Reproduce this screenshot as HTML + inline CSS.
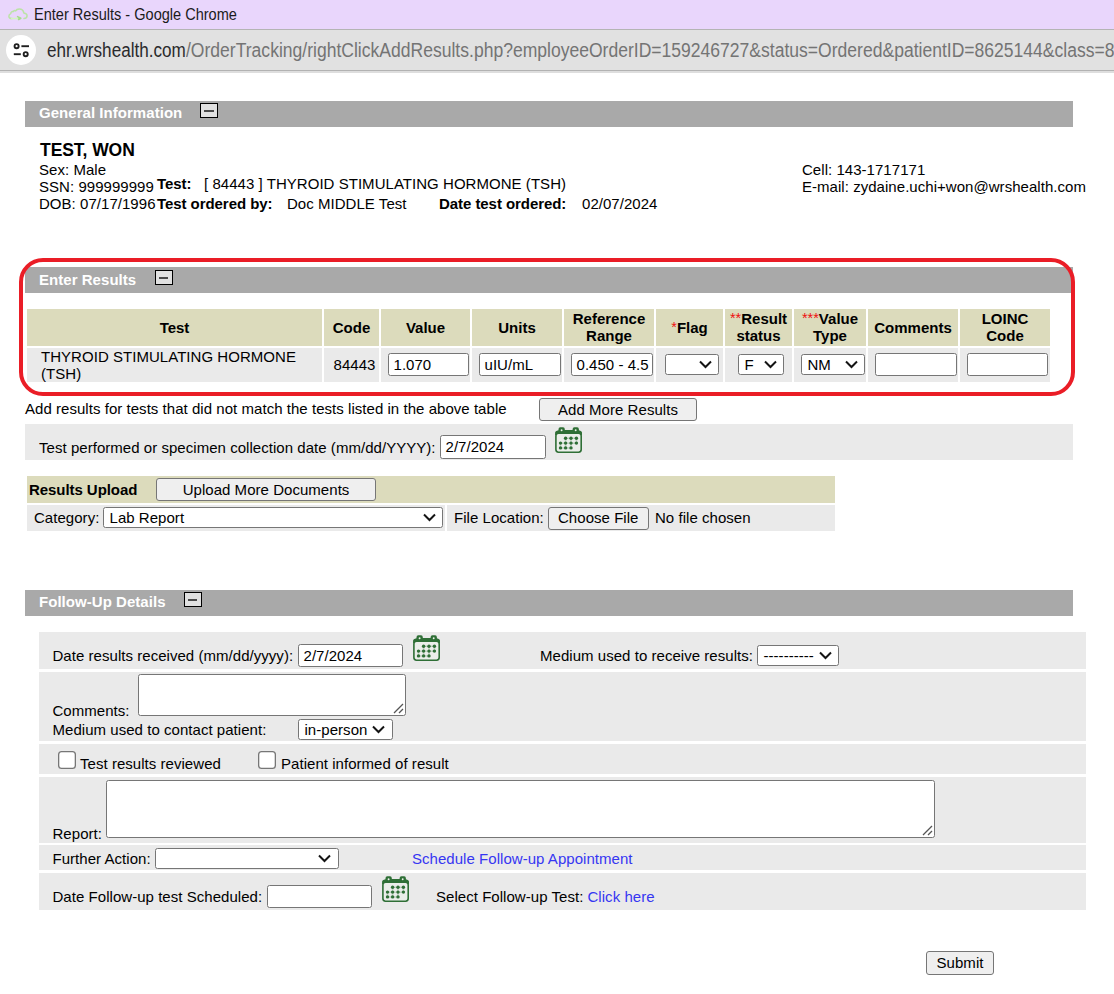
<!DOCTYPE html>
<html lang="en">
<head>
<meta charset="utf-8">
<title>Enter Results</title>
<style>
html,body{margin:0;padding:0;background:#fff}
body{width:1114px;height:994px;position:relative;overflow:hidden;font:15px/17px "Liberation Sans",Arial,sans-serif;color:#000;letter-spacing:.04px}
div,span,a,svg{position:absolute;box-sizing:border-box}
.t{white-space:nowrap}
.b{font-weight:bold;letter-spacing:-.06px}
.bar{background:#a9a9a9;left:25px;width:1048px;height:26px}
.bar .t{left:14px;top:3px;color:#fff;font-weight:bold;line-height:17px}
.tg{width:18px;height:15px;border:1.5px solid #000;background:#e1e1e1;top:2px}
.tg i{position:absolute;left:3px;top:6.2px;width:9.5px;height:2px;background:#4a4a4a}
.k{background:#dcdbbc}
.g{background:#eaeaea}
.in{background:#fff;border:1px solid #767676;border-radius:2.5px;white-space:nowrap;overflow:hidden;padding-left:4.5px;line-height:21px}
.sel{background:#fff;border:1px solid #767676;border-radius:2.5px;white-space:nowrap;overflow:hidden;padding-left:5.5px;line-height:19px}
.sel svg{right:6.3px;top:5px;width:13px;height:9px}
.btn{background:#efefef;border:1px solid #767676;border-radius:3px;white-space:nowrap;text-align:center;line-height:21px}
.ta{background:#fff;border:1px solid #767676;border-radius:2.5px}
.ta svg{right:1px;bottom:1px;width:12px;height:12px}
.cb{background:#fff;box-shadow:inset 0 0 0 1.3px #767676;border-radius:3.5px;width:18px;height:18px}
.lnk{color:#3636f2;white-space:nowrap}
.th{font-weight:bold;text-align:center;white-space:nowrap;letter-spacing:0}
.r{color:#ee1111;font-weight:normal;font-size:14.5px;position:relative;top:-1.5px}
</style>
</head>
<body>

<!-- browser chrome -->
<div id="titlebar" style="left:0;top:0;width:1114px;height:29px;background:#e9d6fc"></div>
<svg id="cloud" style="left:0;top:0" width="40" height="29" viewBox="0 0 40 29"><g fill="none" stroke="#bbe3a6" stroke-width="1.5" stroke-linecap="round" stroke-linejoin="round"><path d="M12 18.5 C9.6 18.6 8.9 17.4 8.9 16.2 C8.9 14.6 10 13.9 10.8 13.6 C10.7 12.2 11.9 11.3 13.1 11.7 C13.6 10.7 14.8 10.3 15.7 10.9 C16.3 9.6 17.6 8.9 19.2 8.9 C21.8 8.9 23.5 10.6 23.8 12.9 C25.9 13.2 27.1 14.4 27.1 15.8 C27.1 17.4 25.8 18.4 24 18.6"/><path d="M11.5 18.4 H18.5" stroke="#d4f4c0"/><path d="M17.6 16.6 L20.8 18.2 L18.6 19.5 M18.6 17.4 L19.3 18.5" stroke="#a9dc90" stroke-width="1.6"/></g></svg>
<div class="t" id="ttl" style="letter-spacing:0;left:33.8px;top:4.6px;font-size:16px;line-height:20px;color:#1b1b1b;transform-origin:0 0;transform:scaleX(.909)">Enter Results - Google Chrome</div>
<div style="left:0;top:29px;width:1114px;height:1px;background:#b4b4b4"></div>
<div id="addr" style="left:0;top:30px;width:1114px;height:40px;background:#e1e1e1"></div>
<div style="left:0;top:70px;width:1114px;height:1px;background:#b2b2b2"></div>
<div style="left:0;top:71px;width:1114px;height:2px;background:#dedede"></div>
<div style="left:6px;top:35px;width:30px;height:30px;border-radius:50%;background:#fff"></div>
<svg style="left:6px;top:35px" width="30" height="30" viewBox="0 0 30 30"><g fill="none" stroke="#1f1f1f" stroke-width="1.9"><circle cx="10.6" cy="11.2" r="2.05"/><path d="M15.4 11.2H23"/><circle cx="19.7" cy="19.2" r="2.05"/><path d="M7.8 19.2H14.8"/></g></svg>
<div class="t" id="url1" style="letter-spacing:0;left:46.8px;top:38px;font-size:20px;line-height:24px;color:#2a2a2c;transform-origin:0 0;transform:scaleX(.855)">ehr.wrshealth.com</div>
<div class="t" id="url2" style="letter-spacing:0;left:186.3px;top:38px;font-size:20px;line-height:24px;color:#747474;transform-origin:0 0;transform:scaleX(.877)">/OrderTracking/rightClickAddResults.php?employeeOrderID=159246727&amp;status=Ordered&amp;patientID=8625144&amp;class=8</div>

<!-- General Information -->
<div class="bar" style="top:101px"><div class="t">General Information</div><div class="tg" style="left:175px"><i></i></div></div>
<div class="t b" style="left:40px;top:140px;font-size:17.5px;line-height:20px">TEST, WON</div>
<div class="t" style="left:39px;top:161px">Sex: Male</div>
<div class="t" style="left:39px;top:178px">SSN: 999999999</div>
<div class="t" style="left:39px;top:195px">DOB: 07/17/1996</div>
<div class="t b" style="left:157px;top:175px">Test:</div>
<div class="t" style="left:204px;top:175px">[ 84443 ] THYROID STIMULATING HORMONE (TSH)</div>
<div class="t b" style="left:157px;top:195px">Test ordered by:</div>
<div class="t" style="left:287px;top:195px">Doc MIDDLE Test</div>
<div class="t b" style="left:439px;top:195px">Date test ordered:</div>
<div class="t" style="left:582px;top:195px">02/07/2024</div>
<div class="t" style="left:802px;top:161px">Cell: 143-1717171</div>
<div class="t" style="left:802px;top:178px">E-mail: zydaine.uchi+won@wrshealth.com</div>

<!-- Enter Results -->
<div class="bar" style="top:267px"><div class="t" style="top:4px">Enter Results</div><div class="tg" style="left:129.5px;top:3px"><i></i></div></div>
<div class="k" style="left:27px;top:309px;width:295px;height:37px"></div>
<div class="g" style="left:27px;top:348px;width:295px;height:34px"></div>
<div class="th" style="left:27px;top:319px;width:295px">Test</div>
<div class="k" style="left:324px;top:309px;width:55px;height:37px"></div>
<div class="g" style="left:324px;top:348px;width:55px;height:34px"></div>
<div class="th" style="left:324px;top:319px;width:55px">Code</div>
<div class="k" style="left:381px;top:309px;width:89px;height:37px"></div>
<div class="g" style="left:381px;top:348px;width:89px;height:34px"></div>
<div class="th" style="left:381px;top:319px;width:89px">Value</div>
<div class="k" style="left:472px;top:309px;width:90px;height:37px"></div>
<div class="g" style="left:472px;top:348px;width:90px;height:34px"></div>
<div class="th" style="left:472px;top:319px;width:90px">Units</div>
<div class="k" style="left:564px;top:309px;width:90px;height:37px"></div>
<div class="g" style="left:564px;top:348px;width:90px;height:34px"></div>
<div class="th" style="left:564px;top:310px;width:90px">Reference</div>
<div class="th" style="left:564px;top:326.5px;width:90px">Range</div>
<div class="k" style="left:656px;top:309px;width:67px;height:37px"></div>
<div class="g" style="left:656px;top:348px;width:67px;height:34px"></div>
<div class="th" style="left:656px;top:319px;width:67px"><span class="r">*</span>Flag</div>
<div class="k" style="left:725px;top:309px;width:67px;height:37px"></div>
<div class="g" style="left:725px;top:348px;width:67px;height:34px"></div>
<div class="th" style="left:725px;top:310px;width:67px"><span class="r">**</span>Result</div>
<div class="th" style="left:725px;top:326.5px;width:67px">status</div>
<div class="k" style="left:794px;top:309px;width:72px;height:37px"></div>
<div class="g" style="left:794px;top:348px;width:72px;height:34px"></div>
<div class="th" style="left:794px;top:310px;width:72px"><span class="r">***</span>Value</div>
<div class="th" style="left:794px;top:326.5px;width:72px">Type</div>
<div class="k" style="left:868px;top:309px;width:90px;height:37px"></div>
<div class="g" style="left:868px;top:348px;width:90px;height:34px"></div>
<div class="th" style="left:868px;top:319px;width:90px">Comments</div>
<div class="k" style="left:960px;top:309px;width:90px;height:37px"></div>
<div class="g" style="left:960px;top:348px;width:90px;height:34px"></div>
<div class="th" style="left:960px;top:310px;width:90px">LOINC</div>
<div class="th" style="left:960px;top:326.5px;width:90px">Code</div>
<div class="t" style="left:41px;top:348px">THYROID STIMULATING HORMONE</div>
<div class="t" style="left:41px;top:365px">(TSH)</div>
<div class="t" style="left:333.5px;top:356px">84443</div>
<div class="in" style="left:388px;top:353px;width:81px;height:23px">1.070</div>
<div class="in" style="left:479px;top:353px;width:82px;height:23px">uIU/mL</div>
<div class="in" style="left:571px;top:353px;width:82px;height:23px">0.450 - 4.5</div>
<div class="sel" style="left:665px;top:354px;width:54px;height:21px"><svg viewBox="0 0 13 9"><path d="M1 1.5 L6.5 7 L12 1.5" fill="none" stroke="#141414" stroke-width="2"/></svg></div>
<div class="sel" style="left:738px;top:354px;width:46px;height:21px">F<svg viewBox="0 0 13 9"><path d="M1 1.5 L6.5 7 L12 1.5" fill="none" stroke="#141414" stroke-width="2"/></svg></div>
<div class="sel" style="left:801px;top:354px;width:64px;height:21px">NM<svg viewBox="0 0 13 9"><path d="M1 1.5 L6.5 7 L12 1.5" fill="none" stroke="#141414" stroke-width="2"/></svg></div>
<div class="in" style="left:875px;top:353px;width:82px;height:23px"></div>
<div class="in" style="left:967px;top:353px;width:81px;height:23px"></div>
<div id="redbox" style="left:19px;top:257.5px;width:1056px;height:138.5px;border:4px solid #ea1d26;border-radius:24px"></div>
<div class="t" style="left:25px;top:400px">Add results for tests that did not match the tests listed in the above table</div>
<div class="btn" style="left:539px;top:397.5px;width:158px;height:23.5px">Add More Results</div>
<div class="g" style="left:25px;top:424px;width:1048px;height:36px"></div>
<div class="t" style="left:39px;top:438.5px">Test performed or specimen collection date (mm/dd/YYYY):</div>
<div class="in" style="left:440px;top:435px;width:106px;height:23.5px">2/7/2024</div>
<svg style="left:555px;top:427px" width="27" height="26" viewBox="0 0 27 26"><path d="M0.1 8 L0.1 5.6 Q0.1 4.5 1.3 4 L3.5 3.2 L3.5 2.2 Q3.5 0.3 5.3 0.3 L8 0.3 Q9.8 0.3 9.8 2.2 L9.8 3.1 L17.6 3.1 L17.6 2.2 Q17.6 0.3 19.4 0.3 L22.1 0.3 Q23.9 0.3 23.9 2.2 L23.9 3.2 L25.8 4 Q27 4.5 27 5.6 L27 8 Z" fill="#2f6f36"/><circle cx="6.6" cy="3.2" r="0.95" fill="#eef3ec"/><circle cx="20.7" cy="3.2" r="0.95" fill="#eef3ec"/><rect x="0.9" y="6.2" width="25.3" height="19" rx="2.6" fill="#ebeeea" stroke="#2f6f36" stroke-width="1.6"/><path d="M5.5 16.2H21.4M5.5 21H16M10.6 11.3H21.4M5.5 16.2V21M10.6 11.3V21M16 11.3V21M21.4 11.3V16.2" stroke="#2f6f36" stroke-opacity=".22" stroke-width="1.6" fill="none"/><g fill="#2f6f36"><circle cx="10.6" cy="11.2" r="1.7"/><circle cx="16" cy="11.2" r="1.7"/><circle cx="21.4" cy="11.2" r="1.7"/><circle cx="5.5" cy="16.1" r="1.7"/><circle cx="10.6" cy="16.1" r="1.7"/><circle cx="16" cy="16.1" r="1.7"/><circle cx="21.4" cy="16.1" r="1.7"/><circle cx="5.5" cy="20.9" r="1.7"/><circle cx="10.6" cy="20.9" r="1.7"/><circle cx="16" cy="20.9" r="1.7"/></g></svg>
<!-- Results Upload -->
<div class="k" style="left:27px;top:476px;width:808px;height:27px"></div>
<div class="t b" style="left:29px;top:481px">Results Upload</div>
<div class="btn" style="left:156px;top:478px;width:220px;height:23px">Upload More Documents</div>
<div class="g" style="left:27px;top:505px;width:417.5px;height:26px"></div>
<div class="g" style="left:447px;top:505px;width:388px;height:26px"></div>
<div class="t" style="left:34px;top:509px">Category:</div>
<div class="sel" style="left:103px;top:507px;width:340px;height:21px">Lab Report<svg viewBox="0 0 13 9"><path d="M1 1.5 L6.5 7 L12 1.5" fill="none" stroke="#141414" stroke-width="2"/></svg></div>
<div class="t" style="left:454px;top:509px">File Location:</div>
<div class="btn" style="left:548px;top:506.5px;width:100.5px;height:23px;line-height:20.5px">Choose File</div>
<div class="t" style="left:655px;top:509px">No file chosen</div>
<!-- Follow-Up Details -->
<div class="bar" style="top:590px"><div class="t">Follow-Up Details</div><div class="tg" style="left:158.5px"><i></i></div></div>
<div class="g" style="left:39px;top:632px;width:1047px;height:37px"></div>
<div class="g" style="left:39px;top:672px;width:1047px;height:69px"></div>
<div class="g" style="left:39px;top:744px;width:1047px;height:30px"></div>
<div class="g" style="left:39px;top:777px;width:1047px;height:66px"></div>
<div class="g" style="left:39px;top:845px;width:1047px;height:25px"></div>
<div class="g" style="left:39px;top:873px;width:1047px;height:37px"></div>
<div class="t" style="left:52.5px;top:647px">Date results received (mm/dd/yyyy):</div>
<div class="in" style="left:298px;top:644px;width:105px;height:23px">2/7/2024</div>
<svg style="left:412.6px;top:635px" width="27" height="26" viewBox="0 0 27 26"><path d="M0.1 8 L0.1 5.6 Q0.1 4.5 1.3 4 L3.5 3.2 L3.5 2.2 Q3.5 0.3 5.3 0.3 L8 0.3 Q9.8 0.3 9.8 2.2 L9.8 3.1 L17.6 3.1 L17.6 2.2 Q17.6 0.3 19.4 0.3 L22.1 0.3 Q23.9 0.3 23.9 2.2 L23.9 3.2 L25.8 4 Q27 4.5 27 5.6 L27 8 Z" fill="#2f6f36"/><circle cx="6.6" cy="3.2" r="0.95" fill="#eef3ec"/><circle cx="20.7" cy="3.2" r="0.95" fill="#eef3ec"/><rect x="0.9" y="6.2" width="25.3" height="19" rx="2.6" fill="#ebeeea" stroke="#2f6f36" stroke-width="1.6"/><path d="M5.5 16.2H21.4M5.5 21H16M10.6 11.3H21.4M5.5 16.2V21M10.6 11.3V21M16 11.3V21M21.4 11.3V16.2" stroke="#2f6f36" stroke-opacity=".22" stroke-width="1.6" fill="none"/><g fill="#2f6f36"><circle cx="10.6" cy="11.2" r="1.7"/><circle cx="16" cy="11.2" r="1.7"/><circle cx="21.4" cy="11.2" r="1.7"/><circle cx="5.5" cy="16.1" r="1.7"/><circle cx="10.6" cy="16.1" r="1.7"/><circle cx="16" cy="16.1" r="1.7"/><circle cx="21.4" cy="16.1" r="1.7"/><circle cx="5.5" cy="20.9" r="1.7"/><circle cx="10.6" cy="20.9" r="1.7"/><circle cx="16" cy="20.9" r="1.7"/></g></svg>
<div class="t" style="left:540px;top:647px">Medium used to receive results:</div>
<div class="sel" style="left:757px;top:645px;width:82px;height:21px">----------<svg viewBox="0 0 13 9"><path d="M1 1.5 L6.5 7 L12 1.5" fill="none" stroke="#141414" stroke-width="2"/></svg></div>
<div class="t" style="left:52.5px;top:702px">Comments:</div>
<div class="ta" style="left:138px;top:674px;width:268px;height:42px"><svg viewBox="0 0 12 12"><path d="M2 11 L11 2 M7 11 L11 7" fill="none" stroke="#555" stroke-width="1.3"/></svg></div>
<div class="t" style="left:52.5px;top:720.5px">Medium used to contact patient:</div>
<div class="sel" style="left:298px;top:719px;width:94.5px;height:21px">in-person<svg viewBox="0 0 13 9"><path d="M1 1.5 L6.5 7 L12 1.5" fill="none" stroke="#141414" stroke-width="2"/></svg></div>
<div class="cb" style="left:57.5px;top:751px"></div>
<div class="t" style="left:80px;top:754.5px">Test results reviewed</div>
<div class="cb" style="left:257.5px;top:751px"></div>
<div class="t" style="left:281px;top:754.5px">Patient informed of result</div>
<div class="t" style="left:52.5px;top:825px">Report:</div>
<div class="ta" style="left:106px;top:780px;width:829px;height:58px"><svg viewBox="0 0 12 12"><path d="M2 11 L11 2 M7 11 L11 7" fill="none" stroke="#555" stroke-width="1.3"/></svg></div>
<div class="t" style="left:52.5px;top:850px">Further Action:</div>
<div class="sel" style="left:155px;top:848px;width:183.5px;height:21px"><svg viewBox="0 0 13 9"><path d="M1 1.5 L6.5 7 L12 1.5" fill="none" stroke="#141414" stroke-width="2"/></svg></div>
<div class="lnk" style="left:412px;top:850px">Schedule Follow-up Appointment</div>
<div class="t" style="left:52.5px;top:888px">Date Follow-up test Scheduled:</div>
<div class="in" style="left:267px;top:885px;width:105px;height:23px"></div>
<svg style="left:381.6px;top:876px" width="27" height="26" viewBox="0 0 27 26"><path d="M0.1 8 L0.1 5.6 Q0.1 4.5 1.3 4 L3.5 3.2 L3.5 2.2 Q3.5 0.3 5.3 0.3 L8 0.3 Q9.8 0.3 9.8 2.2 L9.8 3.1 L17.6 3.1 L17.6 2.2 Q17.6 0.3 19.4 0.3 L22.1 0.3 Q23.9 0.3 23.9 2.2 L23.9 3.2 L25.8 4 Q27 4.5 27 5.6 L27 8 Z" fill="#2f6f36"/><circle cx="6.6" cy="3.2" r="0.95" fill="#eef3ec"/><circle cx="20.7" cy="3.2" r="0.95" fill="#eef3ec"/><rect x="0.9" y="6.2" width="25.3" height="19" rx="2.6" fill="#ebeeea" stroke="#2f6f36" stroke-width="1.6"/><path d="M5.5 16.2H21.4M5.5 21H16M10.6 11.3H21.4M5.5 16.2V21M10.6 11.3V21M16 11.3V21M21.4 11.3V16.2" stroke="#2f6f36" stroke-opacity=".22" stroke-width="1.6" fill="none"/><g fill="#2f6f36"><circle cx="10.6" cy="11.2" r="1.7"/><circle cx="16" cy="11.2" r="1.7"/><circle cx="21.4" cy="11.2" r="1.7"/><circle cx="5.5" cy="16.1" r="1.7"/><circle cx="10.6" cy="16.1" r="1.7"/><circle cx="16" cy="16.1" r="1.7"/><circle cx="21.4" cy="16.1" r="1.7"/><circle cx="5.5" cy="20.9" r="1.7"/><circle cx="10.6" cy="20.9" r="1.7"/><circle cx="16" cy="20.9" r="1.7"/></g></svg>
<div class="t" style="left:436px;top:888px">Select Follow-up Test:</div>
<div class="lnk" style="left:587.5px;top:888px">Click here</div>
<div class="btn" style="left:926px;top:951px;width:68px;height:24px;line-height:22px">Submit</div>

</body>
</html>
